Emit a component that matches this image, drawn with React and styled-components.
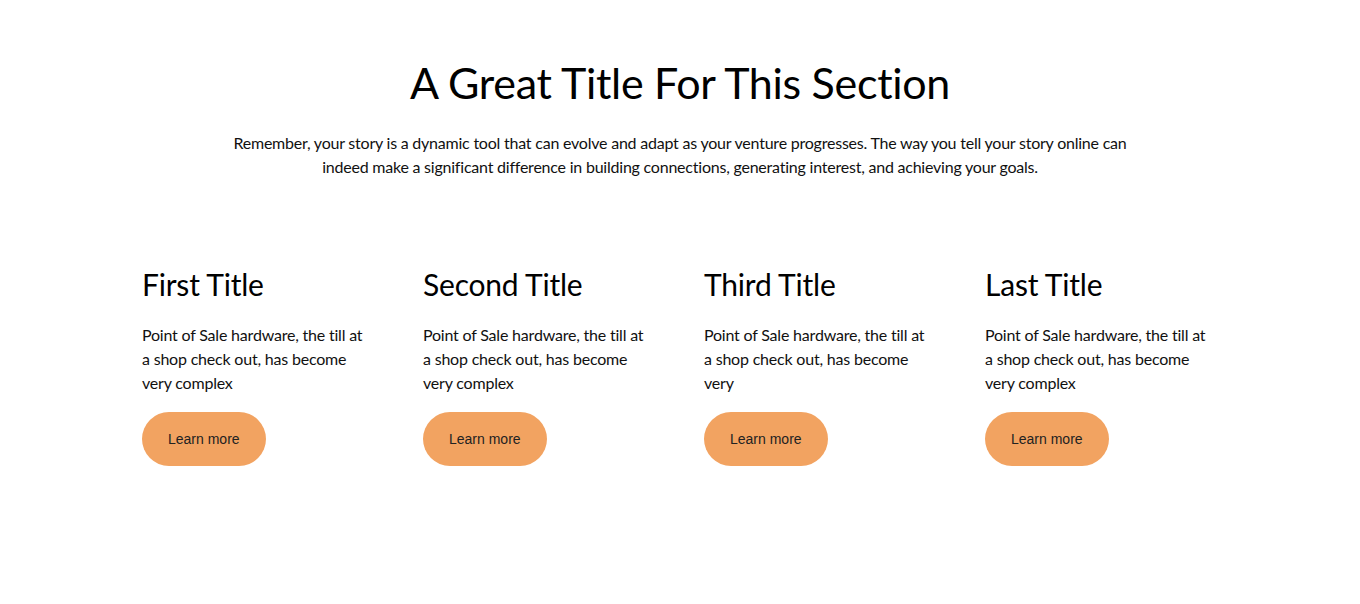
import React from "react";
import styled, { createGlobalStyle } from "styled-components";

const Global = createGlobalStyle`
  html, body { margin: 0; padding: 0; background: #fff; }
  body { font-family: Lato, "Noto Sans", sans-serif; color: #000; }
`;

const Section = styled.section`
  padding: 55px 0 80px;
`;

const Title = styled.h1`
  margin: 0;
  text-align: center;
  font-size: 43px;
  line-height: 55px;
  letter-spacing: -0.3px;
  font-weight: 400;
  color: #000;
`;

const Intro = styled.p`
  margin: 21px auto 0;
  max-width: 900px;
  text-align: center;
  font-size: 16px;
  line-height: 24px;
  letter-spacing: -0.22px;
  color: #111;
`;

const Grid = styled.div`
  max-width: 1124px;
  margin: 87px auto 0;
  display: grid;
  grid-template-columns: repeat(4, 1fr);
`;

const Column = styled.div`
  padding: 0 24px;
  display: flex;
  flex-direction: column;
  align-items: flex-start;
`;

const ColTitle = styled.h2`
  margin: 0;
  font-size: 30px;
  line-height: 36px;
  letter-spacing: -0.2px;
  font-weight: 400;
  color: #000;
`;

const ColText = styled.p`
  margin: 21px 0 17px;
  max-width: 226px;
  font-size: 16px;
  line-height: 24px;
  letter-spacing: -0.2px;
  color: #111;
`;

const Button = styled.a`
  display: inline-block;
  padding: 18px 26px;
  border-radius: 999px;
  background: #f2a361;
  color: #222;
  font-family: "Liberation Sans", Arial, sans-serif;
  font-size: 14px;
  line-height: 18px;
  text-decoration: none;
  cursor: pointer;
`;

const items = [
  { title: "First Title", text: "Point of Sale hardware, the till at a shop check out, has become very complex" },
  { title: "Second Title", text: "Point of Sale hardware, the till at a shop check out, has become very complex" },
  { title: "Third Title", text: "Point of Sale hardware, the till at a shop check out, has become very" },
  { title: "Last Title", text: "Point of Sale hardware, the till at a shop check out, has become very complex" },
];

export default function App() {
  return (
    <>
      <Global />
      <Section>
        <Title>A Great Title For This Section</Title>
        <Intro>
          Remember, your story is a dynamic tool that can evolve and adapt as your venture progresses. The way you tell your story online can indeed make a significant difference in building connections, generating interest, and achieving your goals.
        </Intro>
        <Grid>
          {items.map((it) => (
            <Column key={it.title}>
              <ColTitle>{it.title}</ColTitle>
              <ColText>{it.text}</ColText>
              <Button>Learn more</Button>
            </Column>
          ))}
        </Grid>
      </Section>
    </>
  );
}
